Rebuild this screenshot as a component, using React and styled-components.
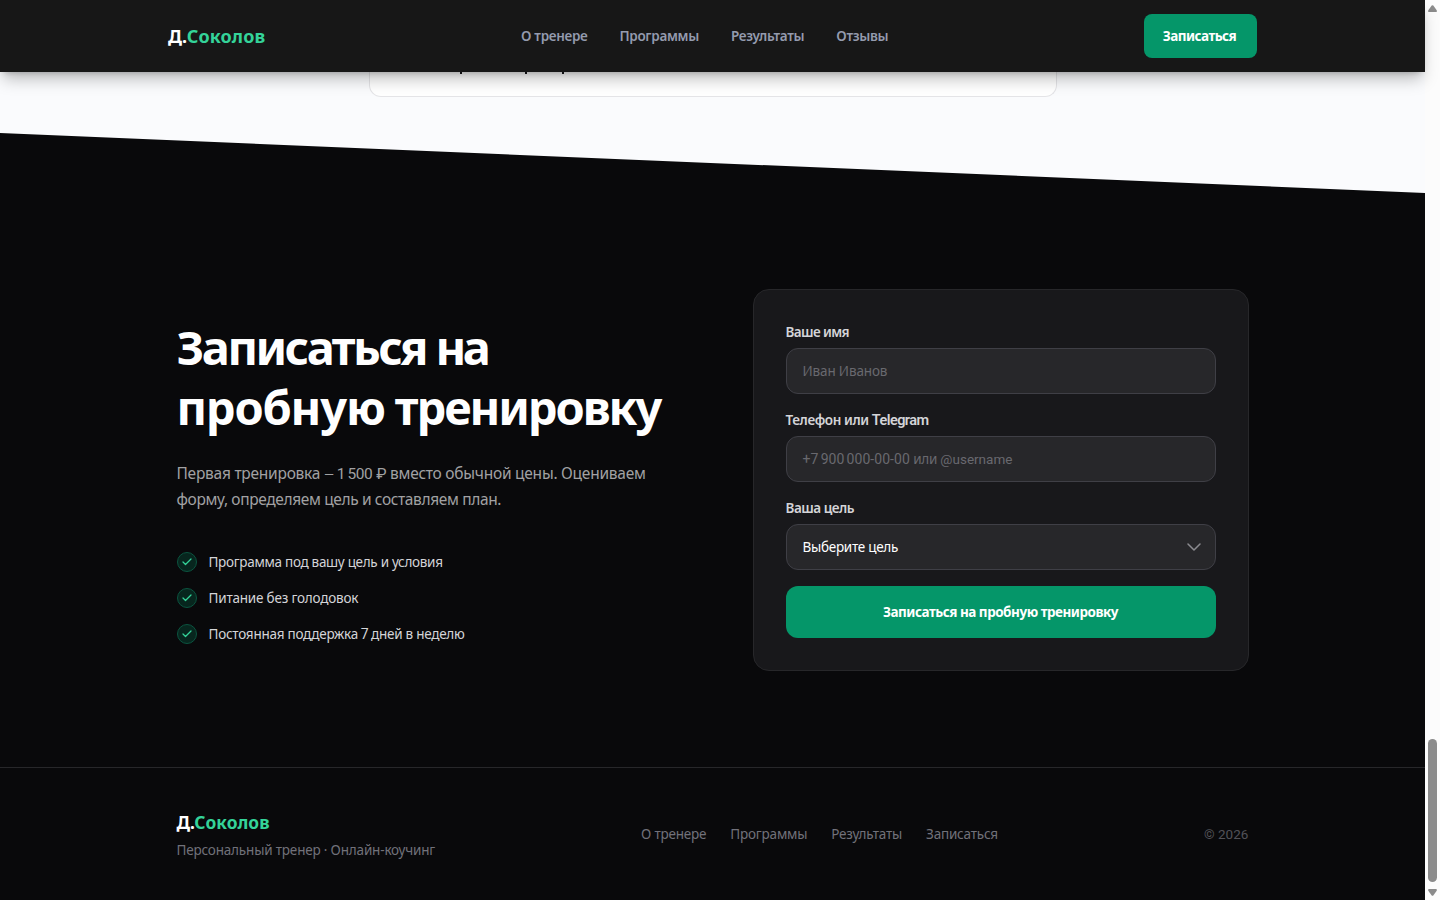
import React from 'react';
import styled, { createGlobalStyle } from 'styled-components';
import { Check } from 'lucide-react';

const GlobalStyle = createGlobalStyle`
  * { box-sizing: border-box; }
  body {
    margin: 0;
    overflow: hidden;
    background: #09090b;
    font-family: "Noto Sans", "Open Sans", sans-serif;
  }
  h2, p, ul { margin: 0; padding: 0; }
  a { color: inherit; text-decoration: none; }
`;

const Window = styled.div`
  display: flex;
  width: 1440px;
  height: 900px;
`;

const Page = styled.div`
  width: 1425px;
  height: 900px;
  flex: none;
  display: flex;
  flex-direction: column;
`;

const Header = styled.header`
  position: relative;
  z-index: 2;
  flex: none;
  height: 72px;
  background: #171717;
  box-shadow: 0 10px 15px -3px rgba(0, 0, 0, 0.25), 0 4px 6px -4px rgba(0, 0, 0, 0.25);
`;

const HeaderInner = styled.div`
  width: 1089px;
  height: 100%;
  margin: 0 auto;
  display: flex;
  align-items: center;
  justify-content: space-between;
`;

const Logo = styled.div`
  font-size: ${(p) => (p.$small ? 17.4 : 18)}px;
  line-height: 28px;
  font-weight: 700;
  color: #fff;
  white-space: nowrap;
  letter-spacing: ${(p) => (p.$small ? -0.55 : -0.4)}px;
`;

const LogoName = styled.span`
  color: #34d399;
  letter-spacing: ${(p) => (p.$small ? 0 : 0.1)}px;
`;

const Nav = styled.nav`
  display: flex;
  gap: ${(p) => (p.$muted ? 24 : 32)}px;
  font-size: 13.5px;
  line-height: 20px;
  font-weight: ${(p) => (p.$muted ? 400 : 600)};
  letter-spacing: ${(p) => (p.$muted ? -0.2 : -0.31)}px;
  color: ${(p) => (p.$muted ? '#71717a' : '#949bae')};
  white-space: nowrap;
`;

const HeaderButton = styled.button`
  width: 113px;
  height: 44px;
  padding: 0 2px 0 0;
  border: 0;
  border-radius: 8px;
  background: #059669;
  color: #fff;
  font: 700 13.5px/20px "Noto Sans", sans-serif;
  letter-spacing: -0.55px;
`;

const Reviews = styled.section`
  flex: none;
  height: 121px;
  background: #fafbfd;
`;

const ReviewCard = styled.div`
  width: 688px;
  height: 25px;
  margin: 0 auto;
  padding-left: 90px;
  display: flex;
  align-items: flex-start;
  background: #fff;
  border: 1px solid #e4e4e7;
  border-top: 0;
  border-radius: 0 0 12px 12px;
`;

const Descender = styled.span`
  width: 2px;
  height: 2px;
  margin-right: ${(p) => p.$gap}px;
  background: #18181b;
`;

const Signup = styled.section`
  flex: none;
  margin-top: -60px;
  padding: 156px 0 96px;
  background: #09090b;
  clip-path: polygon(0 0, 100% 60px, 100% 100%, 0 100%);
`;

const SignupGrid = styled.div`
  width: 1072px;
  margin: 0 auto;
  display: grid;
  grid-template-columns: 1fr 1fr;
  gap: 80px;
  align-items: center;
`;

const Title = styled.h2`
  padding-top: 1px;
  margin-bottom: 23px;
  font-size: 47px;
  line-height: 60px;
  font-weight: 700;
  color: #fff;
  white-space: nowrap;
`;

const TitleLine = styled.span`
  display: block;
  letter-spacing: ${(p) => p.$track}px;
`;

const TitleWord = styled.span`
  letter-spacing: ${(p) => p.$track}px;
`;

const Lead = styled.p`
  margin-bottom: 40px;
  font-size: 15.5px;
  line-height: 26px;
  color: #a1a1a3;
  white-space: nowrap;
`;

const LeadLine = styled.span`
  display: block;
  letter-spacing: ${(p) => p.$track}px;
`;

const Latin = styled.span`
  font-family: Roboto, sans-serif;
  font-size: ${(p) => p.$size}px;
  line-height: 0;
  letter-spacing: ${(p) => p.$track || 0}px;
  word-spacing: ${(p) => p.$word || 0}px;
`;

const Benefits = styled.ul`
  display: flex;
  flex-direction: column;
  gap: 16px;
  list-style: none;
`;

const Benefit = styled.li`
  display: flex;
  align-items: center;
  gap: 12px;
  font-size: 13.5px;
  line-height: 20px;
  letter-spacing: ${(p) => p.$track}px;
  color: #d4d4d8;
  white-space: nowrap;
`;

const CheckMark = styled.span`
  width: 20px;
  height: 20px;
  flex: none;
  display: grid;
  place-items: center;
  border-radius: 50%;
  border: 1px solid #0b5440;
  background: #07261e;
  color: #34d399;
`;

const Form = styled.form`
  display: flex;
  flex-direction: column;
  gap: 16px;
  padding: 32px;
  border: 1px solid #27272a;
  border-radius: 16px;
  background: #18181b;
`;

const Field = styled.label`
  display: flex;
  flex-direction: column;
  gap: 6px;
`;

const FieldLabel = styled.span`
  font-size: 13.5px;
  line-height: 20px;
  font-weight: 600;
  letter-spacing: ${(p) => p.$track}px;
  color: #d4d4d8;
  white-space: nowrap;
`;

const Control = styled.span`
  height: 46px;
  padding: 0 14px 0 16px;
  display: flex;
  align-items: center;
  justify-content: space-between;
  border: 1px solid #3f3f46;
  border-radius: 12px;
  background: #27272a;
  font-size: 13.5px;
  line-height: 20px;
  letter-spacing: ${(p) => p.$track}px;
  color: ${(p) => (p.$filled ? '#fff' : '#69696f')};
  white-space: nowrap;
`;

const Chevron = styled.svg`
  width: 14px;
  height: 8px;
  fill: none;
  stroke: #8b8b90;
  stroke-width: 1.5;
  stroke-linecap: round;
  stroke-linejoin: round;
`;

const SubmitButton = styled.button`
  height: 52px;
  padding: 0;
  border: 0;
  border-radius: 12px;
  background: #059669;
  color: #fff;
  font: 700 13.5px/20px "Noto Sans", sans-serif;
  letter-spacing: -0.49px;
`;

const Footer = styled.footer`
  flex: 1;
  border-top: 1px solid #27272a;
  background: #09090b;
`;

const FooterInner = styled.div`
  width: 1072px;
  margin: 0 auto;
  padding-top: 40px;
  display: flex;
  align-items: center;
  justify-content: space-between;
`;

const Tagline = styled.p`
  margin-top: 4px;
  font-size: 13.5px;
  line-height: 20px;
  letter-spacing: -0.18px;
  color: #71717a;
`;

const Copyright = styled.div`
  font-size: 13.5px;
  line-height: 20px;
  color: #525258;
`;

const Scrollbar = styled.div`
  width: 15px;
  flex: none;
  padding: 5px 0 4px;
  display: flex;
  flex-direction: column;
  align-items: center;
  background: #fcfcfc;
`;

const Thumb = styled.div`
  width: 9px;
  height: 143px;
  margin: auto 0 7px;
  border-radius: 5px;
  background: #8b8b8b;
`;

const Arrow = styled.svg`
  width: 9px;
  height: 7px;
  fill: #8b8b8b;
  transform: ${(p) => (p.$down ? 'rotate(180deg)' : 'none')};
`;

const ScrollArrow = ({ down }) => (
  <Arrow $down={down} viewBox="0 0 9 7">
    <path d="M3.7 0.6Q4.5-0.2 5.3 0.6L8.7 5.3Q9.2 7 8 7H1Q-0.2 7 0.3 5.3Z" />
  </Arrow>
);

const benefits = [
  { track: -0.3, text: 'Программа под вашу цель и условия' },
  { track: -0.2, text: 'Питание без голодовок' },
  {
    track: -0.25,
    text: (
      <>
        Постоянная поддержка<Latin $size={14} $track={-0.3} $word={-0.5}> 7 </Latin>дней в неделю
      </>
    ),
  },
];

export default function App() {
  return (
    <Window>
      <GlobalStyle />
      <Page>
        <Header>
          <HeaderInner>
            <Logo>
              Д.<LogoName>Соколов</LogoName>
            </Logo>
            <Nav>
              <a href="#about">О тренере</a>
              <a href="#programs">Программы</a>
              <a href="#results">Результаты</a>
              <a href="#reviews">Отзывы</a>
            </Nav>
            <HeaderButton>Записаться</HeaderButton>
          </HeaderInner>
        </Header>
        <Reviews>
          <ReviewCard>
            <Descender $gap={63} />
            <Descender $gap={35} />
            <Descender $gap={0} />
          </ReviewCard>
        </Reviews>
        <Signup>
          <SignupGrid>
            <div>
              <Title>
                <TitleLine $track={-2.5}>
                  Записаться <TitleWord $track={-3.6}>на</TitleWord>
                </TitleLine>
                <TitleLine $track={-1.2}>
                  пробную<TitleWord $track={-2.1}> тренировку</TitleWord>
                </TitleLine>
              </Title>
              <Lead>
                <LeadLine $track={-0.25}>
                  Первая тренировка <Latin $size={12.8}>—</Latin>
                  <Latin $size={15.5} $track={-0.5} $word={-0.6}> 1 500</Latin>
                  <Latin $size={15.5} $track={-0.4} $word={0.6}> ₽</Latin>
                  {' '}вместо обычной цены. Оцениваем
                </LeadLine>
                <LeadLine $track={-0.37}>форму, определяем цель и составляем план.</LeadLine>
              </Lead>
              <Benefits>
                {benefits.map((item, i) => (
                  <Benefit key={i} $track={item.track}>
                    <CheckMark>
                      <Check size={12} strokeWidth={2.5} />
                    </CheckMark>
                    <span>{item.text}</span>
                  </Benefit>
                ))}
              </Benefits>
            </div>
            <Form>
              <Field>
                <FieldLabel $track={-0.6}>Ваше имя</FieldLabel>
                <Control $track={-0.15}>Иван Иванов</Control>
              </Field>
              <Field>
                <FieldLabel $track={-0.4}>
                  Телефон или <Latin $size={14.5} $track={-0.58}>Telegram</Latin>
                </FieldLabel>
                <Control $track={-0.25}>
                  <span>
                    <Latin $size={14} $track={0.05} $word={-1.3}>+7 900 000-00-00</Latin> или{' '}
                    <Latin $size={13.5}>@username</Latin>
                  </span>
                </Control>
              </Field>
              <Field>
                <FieldLabel $track={-0.48}>Ваша цель</FieldLabel>
                <Control $filled $track={-0.28}>
                  Выберите цель
                  <Chevron viewBox="0 0 14 8">
                    <path d="M1 1L7 7L13 1" />
                  </Chevron>
                </Control>
              </Field>
              <SubmitButton type="button">Записаться на пробную тренировку</SubmitButton>
            </Form>
          </SignupGrid>
        </Signup>
        <Footer>
          <FooterInner>
            <div>
              <Logo $small>
                Д.<LogoName $small>Соколов</LogoName>
              </Logo>
              <Tagline>Персональный тренер · Онлайн-коучинг</Tagline>
            </div>
            <Nav $muted>
              <a href="#about">О тренере</a>
              <a href="#programs">Программы</a>
              <a href="#results">Результаты</a>
              <a href="#signup">Записаться</a>
            </Nav>
            <Copyright>
              <Latin $size={13.5} $track={0.05}>© 2026</Latin>
            </Copyright>
          </FooterInner>
        </Footer>
      </Page>
      <Scrollbar>
        <ScrollArrow />
        <Thumb />
        <ScrollArrow down />
      </Scrollbar>
    </Window>
  );
}
